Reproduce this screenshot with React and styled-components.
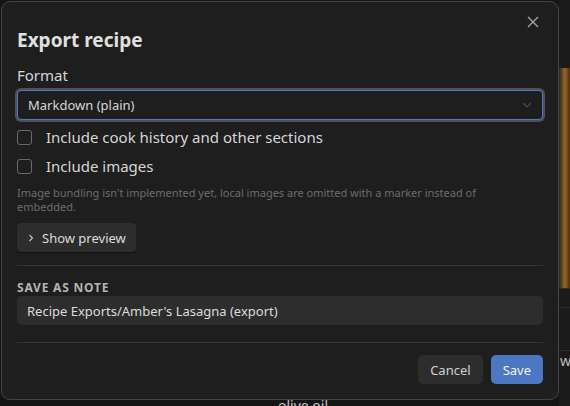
import React from 'react';
import styled, { createGlobalStyle } from 'styled-components';

const Global = createGlobalStyle`
  html, body {
    margin: 0;
    padding: 0;
    background: #151515;
    font-family: "Noto Sans", "Open Sans", sans-serif;
  }
`;

const Page = styled.div`
  position: relative;
  width: 570px;
  height: 406px;
  overflow: hidden;
  background: #141414;
  display: flex;
  justify-content: flex-end;
`;

const SideColumn = styled.div`
  width: 11px;
  display: flex;
  flex-direction: column;
  background: #1b1b1b;
`;

const Photo = styled.div`
  margin-top: 68px;
  height: 220px;
  background:
    linear-gradient(90deg, #2a2620 0%, #5e421f 25%, #946629 50%, #6a4a1c 80%, #3a2a18 100%);
`;

const StripRow = styled.div`
  height: ${p => p.$h}px;
  border-top: 1px solid #2c2c2c;
  color: #bbb;
  font-size: 14px;
  padding-left: 1px;
`;

const BottomText = styled.div`
  position: absolute;
  left: 278px;
  top: 396px;
  color: #c8c8c8;
  font-size: 14px;
`;

const Dialog = styled.div`
  position: absolute;
  left: 1px;
  top: 1px;
  width: 558px;
  height: 399px;
  box-sizing: border-box;
  background: #1e1e1e;
  border: 1px solid #444;
  border-radius: 9px;
  padding: 0 15px;
  display: flex;
  flex-direction: column;
  color: #dcdcdc;
`;

const CloseButton = styled.button`
  position: absolute;
  top: 13px;
  right: 18px;
  width: 14px;
  height: 14px;
  padding: 0;
  border: none;
  background: none;
  display: flex;
  align-items: center;
  justify-content: center;
`;

const Title = styled.h2`
  margin: 27px 0 0;
  font-size: 19px;
  line-height: 23px;
  font-weight: 700;
  color: #e0e0e0;
`;

const Label = styled.div`
  margin-top: 13px;
  font-size: 15px;
  line-height: 20px;
  color: #d6d6d6;
`;

const Select = styled.div`
  margin-top: 5px;
  height: 30px;
  box-sizing: border-box;
  border: 1px solid #4a7bd0;
  border-radius: 4px;
  box-shadow: 0 0 0 2px #505050;
  background: #1e1e1e;
  display: flex;
  align-items: center;
  justify-content: space-between;
  padding: 0 10px 0 10px;
  font-size: 13px;
  color: #d6d6d6;
`;

const CheckRow = styled.label`
  margin-top: ${p => p.$mt}px;
  display: flex;
  align-items: center;
  gap: 14px;
  font-size: 15px;
  line-height: 20px;
  color: #d6d6d6;
`;

const Box = styled.span`
  width: 13px;
  height: 13px;
  border: 1px solid #6a6a6a;
  border-radius: 3px;
  flex-shrink: 0;
`;

const Hint = styled.div`
  margin-top: 10px;
  max-width: 485px;
  font-size: 11px;
  line-height: 14px;
  color: #6c6c6c;
`;

const PreviewButton = styled.button`
  margin-top: 9px;
  align-self: flex-start;
  height: 29px;
  padding: 0 10px 0 11px;
  border: none;
  border-radius: 4px;
  background: #2d2d2d;
  box-shadow: 0 1px 1px rgba(0, 0, 0, 0.4);
  display: flex;
  align-items: center;
  gap: 8px;
  font-family: inherit;
  font-size: 13px;
  color: #dcdcdc;
`;

const Divider = styled.hr`
  margin: ${p => p.$mt}px 0 0;
  border: none;
  border-top: 1px solid #353535;
`;

const SectionHeading = styled.div`
  margin-top: 15px;
  font-size: 12px;
  line-height: 14px;
  font-weight: 700;
  letter-spacing: 0.8px;
  color: #b4b4b4;
`;

const TextInput = styled.div`
  margin-top: 1px;
  height: 29px;
  border-radius: 5px;
  background: #2d2d2d;
  display: flex;
  align-items: center;
  padding: 0 10px;
  font-size: 13px;
  color: #dcdcdc;
`;

const Footer = styled.div`
  margin-top: 12px;
  display: flex;
  justify-content: flex-end;
  gap: 8px;
`;

const Button = styled.button`
  height: 29px;
  padding: 0 12px;
  border: none;
  border-radius: 5px;
  font-family: inherit;
  font-size: 13px;
  background: ${p => (p.$primary ? '#4a78c2' : '#2d2d2d')};
  color: ${p => (p.$primary ? '#f2f2f2' : '#d0d0d0')};
`;

export default function App() {
  return (
    <Page>
      <Global />
      <SideColumn>
        <Photo />
        <StripRow $h={18} />
        <StripRow $h={42} />
        <StripRow $h={40}>w</StripRow>
      </SideColumn>
      <BottomText>olive oil</BottomText>
      <Dialog>
        <CloseButton>
          <svg width="12" height="12" viewBox="0 0 12 12">
            <path d="M1 1L11 11M11 1L1 11" stroke="#a8a8a8" strokeWidth="1.3" fill="none" />
          </svg>
        </CloseButton>
        <Title>Export recipe</Title>
        <Label>Format</Label>
        <Select>
          <span>Markdown (plain)</span>
          <svg width="10" height="6" viewBox="0 0 10 6">
            <path d="M1 1L5 5L9 1" stroke="#4a4a4a" strokeWidth="1.2" fill="none" />
          </svg>
        </Select>
        <CheckRow $mt={7}>
          <Box />
          Include cook history and other sections
        </CheckRow>
        <CheckRow $mt={9}>
          <Box />
          Include images
        </CheckRow>
        <Hint>
          Image bundling isn't implemented yet, local images are omitted with a marker instead of embedded.
        </Hint>
        <PreviewButton>
          <svg width="6" height="8" viewBox="0 0 6 8">
            <path d="M1.5 1L4.5 4L1.5 7" stroke="#c8c8c8" strokeWidth="1.1" fill="none" />
          </svg>
          Show preview
        </PreviewButton>
        <Divider $mt={13} />
        <SectionHeading>SAVE AS NOTE</SectionHeading>
        <TextInput>Recipe Exports/Amber's Lasagna (export)</TextInput>
        <Divider $mt={17} />
        <Footer>
          <Button>Cancel</Button>
          <Button $primary>Save</Button>
        </Footer>
      </Dialog>
    </Page>
  );
}
